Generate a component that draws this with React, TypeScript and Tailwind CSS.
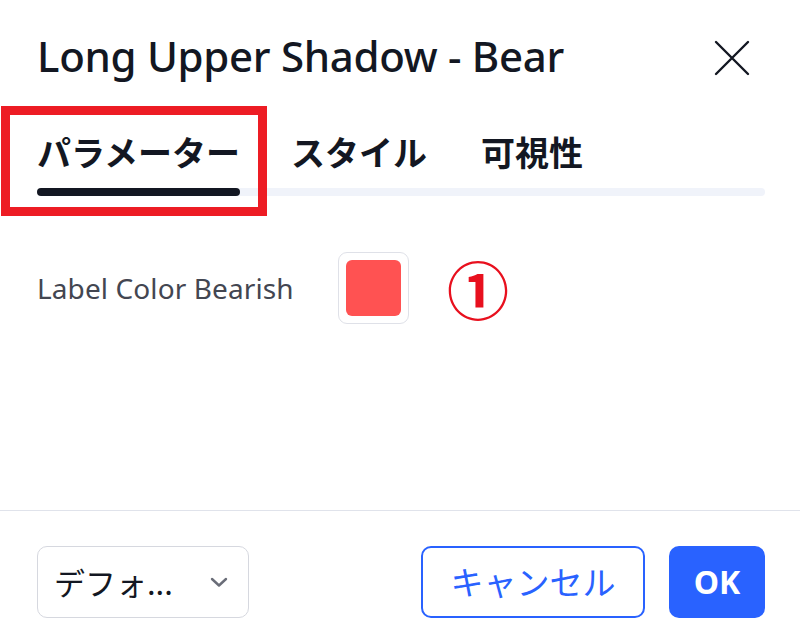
import React from 'react';

const jp = { fontFamily: '"Noto Sans CJK JP", "Noto Sans", sans-serif' };
const latin = { fontFamily: '"Noto Sans", "Noto Sans CJK JP", sans-serif' };

const CloseIcon: React.FC = () => (
  <svg width="36" height="36" viewBox="0 0 36 36" fill="none">
    <path d="M2 2L34 34M34 2L2 34" stroke="#131722" strokeWidth="2.4" strokeLinecap="round" />
  </svg>
);

const Chevron: React.FC = () => (
  <svg width="18" height="12" viewBox="0 0 18 12" fill="none">
    <path d="M2 3L9 9.5L16 3" stroke="#6a6d78" strokeWidth="2.4" strokeLinecap="round" strokeLinejoin="round" />
  </svg>
);

export default function App() {
  return (
    <div className="relative w-[800px] h-[643px] bg-white flex flex-col overflow-hidden">
      {/* Header */}
      <div className="h-[112px] pl-[37px] pr-[35px] flex items-center justify-between">
        <h1 className="text-[42px] leading-none font-medium text-[#131722] tracking-[-0.3px]" style={latin}>
          Long Upper Shadow - Bear
        </h1>
        <button className="mr-[15px] mt-[4px]">
          <CloseIcon />
        </button>
      </div>

      {/* Tabs */}
      <div className="flex pl-[37px] pr-[35px] pt-[18px]">
        <div className="flex flex-col">
          <span className="h-[44px] text-[34px] leading-[44px] font-bold text-[#131722]" style={jp}>
            パラメーター
          </span>
          <div className="mt-[14px] h-[8px] rounded-full bg-[#131722] relative z-10" />
        </div>
        <div className="flex-1 flex flex-col">
          <div className="flex h-[44px] pl-[51px] gap-[54px]">
            <span className="text-[34px] leading-[44px] font-bold text-[#131722]" style={jp}>スタイル</span>
            <span className="text-[34px] leading-[44px] font-bold text-[#131722]" style={jp}>可視性</span>
          </div>
          <div className="mt-[14px] -ml-[8px] h-[8px] rounded-r-full bg-[#f0f3fa]" />
        </div>
      </div>

      {/* Body */}
      <div className="flex-1 pl-[37px] pt-[56px]">
        <div className="flex items-center">
          <span className="w-[301px] text-[28px] text-[#434651] tracking-[0.1px]" style={latin}>
            Label Color Bearish
          </span>
          <div className="w-[71px] h-[72px] rounded-[9px] border border-[#dfe1e8] flex items-center justify-center">
            <div className="w-[55px] h-[56px] rounded-[6px] bg-[#ff5252]" />
          </div>
          <span className="ml-[38px] text-[62px] leading-none text-[#e8101e] font-bold" style={jp}>
            ①
          </span>
        </div>
      </div>

      {/* Footer */}
      <div className="border-t border-[#e0e3eb] h-[133px] pl-[37px] pr-[35px] pt-[35px] flex items-start justify-between">
        <div className="w-[212px] h-[72px] rounded-[10px] border border-[#d6d8df] flex items-center pl-[16px] pr-[20px] justify-between">
          <span className="text-[31px] text-[#131722]" style={jp}>デフォ...</span>
          <Chevron />
        </div>
        <div className="flex gap-[24px]">
          <button className="w-[224px] h-[72px] rounded-[10px] border-2 border-[#2962ff] text-[33px] text-[#2962ff] flex items-center justify-center" style={jp}>
            キャンセル
          </button>
          <button className="w-[96px] h-[72px] rounded-[10px] bg-[#2962ff] text-[32px] font-bold text-white flex items-center justify-center" style={latin}>
            OK
          </button>
        </div>
      </div>

      {/* Annotation box */}
      <div className="absolute left-[1px] top-[106px] w-[266px] h-[110px] border-[9px] border-[#ed1c24]" />
    </div>
  );
}
